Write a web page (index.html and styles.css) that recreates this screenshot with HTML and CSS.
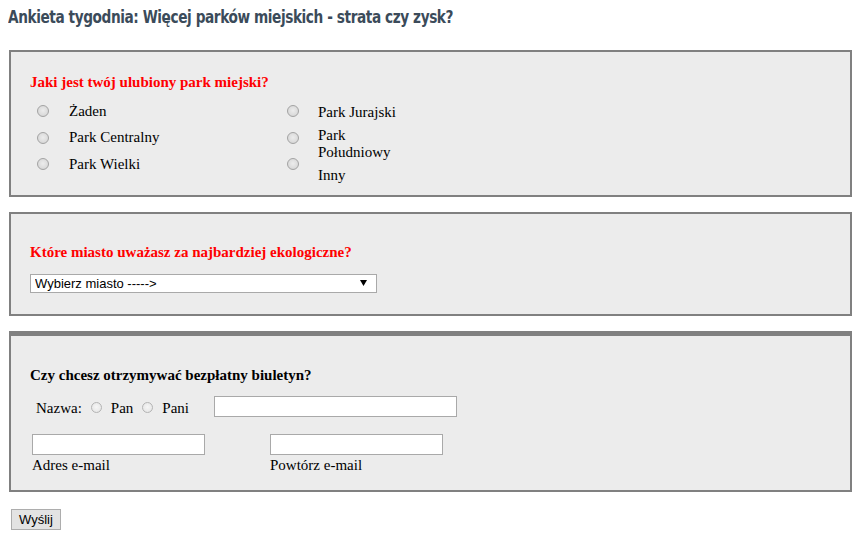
FILE: index.html
```html
<!DOCTYPE html>
<html lang="pl">
<head>
<meta charset="utf-8">
<title>Ankieta tygodnia</title>
<link rel="stylesheet" href="styles.css">
</head>
<body>
<h1 class="title"><span class="title-text">Ankieta tygodnia: Więcej parków miejskich - strata czy zysk?</span></h1>
<form class="survey">
  <div class="box box-parks">
    <p class="question red">Jaki jest twój ulubiony park miejski?</p>
    <div class="options">
      <div class="opt-col">
        <div class="opt"><input type="radio" class="radio" name="park" id="p1"><label for="p1">Żaden</label></div>
        <div class="opt"><input type="radio" class="radio" name="park" id="p2"><label for="p2">Park Centralny</label></div>
        <div class="opt"><input type="radio" class="radio" name="park" id="p3"><label for="p3">Park Wielki</label></div>
      </div>
      <div class="opt-col-split">
        <div class="radio-stack">
          <div class="radio-cell"><input type="radio" class="radio" name="park" id="p4"></div>
          <div class="radio-cell"><input type="radio" class="radio" name="park" id="p5"></div>
          <div class="radio-cell"><input type="radio" class="radio" name="park" id="p6"></div>
        </div>
        <div class="label-stack">
          <label for="p4" class="lbl">Park Jurajski</label>
          <label for="p5" class="lbl">Park Południowy</label>
          <label for="p6" class="lbl">Inny</label>
        </div>
      </div>
    </div>
  </div>

  <div class="box box-city">
    <p class="question red">Które miasto uważasz za najbardziej ekologiczne?</p>
    <div class="select-wrap">
      <select class="select">
        <option>Wybierz miasto -----&gt;</option>
      </select>
      <svg class="select-arrow" width="7" height="6" viewBox="0 0 7 6"><polygon points="0,0 7,0 3.5,6" fill="#000"/></svg>
    </div>
  </div>

  <div class="box box-news">
    <p class="question">Czy chcesz otrzymywać bezpłatny biuletyn?</p>
    <div class="name-row">
      <span class="txt">Nazwa:</span>
      <input type="radio" class="radio radio-sm" name="title" id="t1">
      <label for="t1" class="txt">Pan</label>
      <input type="radio" class="radio radio-sm" name="title" id="t2">
      <label for="t2" class="txt">Pani</label>
      <input type="text" class="field field-name">
    </div>
    <div class="email-row">
      <div class="email-group">
        <input type="text" class="field field-email" id="e1">
        <label for="e1" class="field-label">Adres e-mail</label>
      </div>
      <div class="email-group">
        <input type="text" class="field field-email" id="e2">
        <label for="e2" class="field-label">Powtórz e-mail</label>
      </div>
    </div>
  </div>

  <button type="button" class="submit">Wyślij</button>
</form>
</body>
</html>
```
FILE: styles.css
```css
html, body {
  background: #fff;
}
body {
  margin: 0;
  padding: 5px 8px 8px;
  font-family: "Liberation Serif", "Times New Roman", serif;
  font-size: 15px;
  line-height: 17px;
  color: #000;
}
.title {
  margin: 0 0 21px 0;
  height: 24px;
  font-family: "DejaVu Sans Condensed", "DejaVu Sans", sans-serif;
  font-stretch: condensed;
  font-weight: bold;
  font-size: 18px;
  line-height: 24px;
  color: #3b4b5a;
  white-space: nowrap;
}
.title-text {
  display: inline-block;
  letter-spacing: -0.5px;
  transform: scaleX(0.845);
  transform-origin: left center;
}
.survey {
  margin: 0;
}
.box {
  width: 843px;
  box-sizing: border-box;
  margin-left: 1px;
  border: 2px solid #808080;
  background: #ececec;
  padding-left: 19px;
  padding-right: 19px;
}
.box + .box {
  margin-top: 15px;
}
.question {
  margin: 0;
  font-weight: bold;
  line-height: 17px;
}
.red {
  color: #ff0000;
}
.box-parks {
  padding-top: 22px;
  padding-bottom: 11px;
}
.options {
  display: flex;
  margin-top: 7px;
  padding-left: 7px;
}
.opt-col {
  width: 250px;
  display: flex;
  flex-direction: column;
}
.opt {
  height: 26.5px;
  display: flex;
  align-items: center;
}
.opt .radio {
  margin-right: 20px;
}
.opt-col-split {
  display: flex;
}
.radio-stack {
  display: flex;
  flex-direction: column;
}
.radio-cell {
  height: 26.5px;
  display: flex;
  align-items: center;
}
.label-stack {
  display: flex;
  flex-direction: column;
  gap: 6px;
  padding-top: 6px;
  margin-left: 19px;
  width: 85px;
}
.radio {
  -webkit-appearance: none;
  appearance: none;
  width: 12px;
  height: 12px;
  margin: 0;
  border-radius: 50%;
  border: 1px solid #a3a3a3;
  background: radial-gradient(circle at 50% 45%, #ececec 0%, #dcdcdc 60%, #cfcfcf 100%);
  box-sizing: border-box;
  flex: none;
}
.radio-sm {
  width: 11px;
  height: 11px;
  border-color: #b4b4b4;
  background: radial-gradient(circle at 50% 45%, #f6f6f6 0%, #e8e8e8 70%, #dadada 100%);
  margin: 6px 9px 0 9px;
}
.box-city {
  padding-top: 30px;
  padding-bottom: 21px;
}
.select-wrap {
  position: relative;
  width: 347px;
  margin-top: 13px;
}
.select {
  -webkit-appearance: none;
  appearance: none;
  display: block;
  width: 347px;
  height: 19px;
  box-sizing: border-box;
  margin: 0;
  border: 1px solid #a9a9a9;
  border-radius: 0;
  background: #fff;
  padding: 0 0 0 4px;
  font-family: "Liberation Sans", Arial, sans-serif;
  font-size: 13px;
  color: #000;
}
.select-arrow {
  position: absolute;
  right: 10px;
  top: 6px;
  pointer-events: none;
}
.box-news {
  border-top-width: 5px;
  padding-top: 31px;
  padding-bottom: 16px;
}
.name-row {
  display: flex;
  align-items: flex-start;
  margin-top: 12px;
  padding-left: 6px;
  height: 21px;
}
.txt {
  margin-top: 4px;
  line-height: 17px;
}
.field {
  display: block;
  height: 21px;
  box-sizing: border-box;
  margin: 0;
  border: 1px solid #a9a9a9;
  background: #fff;
  padding: 1px 3px;
  font-family: "Liberation Sans", Arial, sans-serif;
  font-size: 13px;
}
.field-name {
  width: 243px;
  margin-left: 25px;
}
.email-row {
  display: flex;
  margin-top: 17px;
  padding-left: 2px;
}
.email-group {
  width: 238px;
  display: flex;
  flex-direction: column;
}
.field-email {
  width: 173px;
}
.field-label {
  margin-top: 2px;
  line-height: 17px;
}
.submit {
  display: block;
  margin: 17px 0 0 3px;
  width: 50px;
  height: 21px;
  padding: 0 6px;
  border: 1px solid #adadad;
  border-radius: 0;
  background: #e3e3e3;
  font-family: "Liberation Sans", Arial, sans-serif;
  font-size: 13px;
  color: #000;
}
```
